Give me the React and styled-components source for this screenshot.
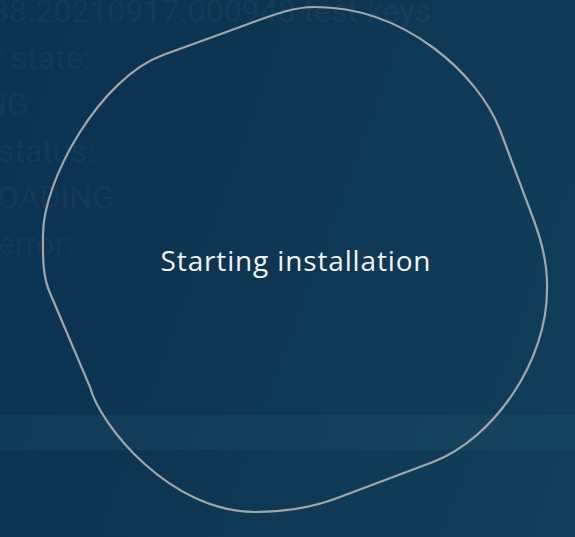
import React from 'react';
import styled, { createGlobalStyle } from 'styled-components';

const GlobalStyle = createGlobalStyle`
    html, body, #root {
        margin: 0;
        padding: 0;
        width: 100%;
        height: 100%;
    }
    body {
        background: #0d3452;
        font-family: Roboto, "Liberation Sans", sans-serif;
    }
`;

const Screen = styled.div`
    position: relative;
    width: 100vw;
    height: 100vh;
    overflow: hidden;
    display: flex;
    flex-direction: column;
    background: linear-gradient(110deg, #0b3250 0%, #0e3653 45%, #123f5a 100%);
`;

const Log = styled.div`
    margin-top: -12px;
    display: flex;
    flex-direction: column;
    font-family: Roboto, "Liberation Sans", sans-serif;
    font-size: 32px;
    line-height: 46.5px;
    color: rgba(255, 255, 255, 0.045);
    white-space: nowrap;
`;

const LogLine = styled.div`
    margin-left: ${p => p.$shift}px;
`;

const Band = styled.div`
    margin-top: auto;
    margin-bottom: 87px;
    height: 35px;
    background: rgba(70, 130, 150, 0.1);
`;

const Blob = styled.div`
    position: absolute;
    top: 6px;
    left: 42px;
    width: 508px;
    height: 508px;
    display: flex;
    align-items: center;
    justify-content: center;
`;

const Outline = styled.svg`
    position: absolute;
    inset: 0;
    width: 100%;
    height: 100%;
    overflow: visible;
`;

const Label = styled.div`
    position: relative;
    font-family: "Open Sans", "Noto Sans", sans-serif;
    font-weight: 400;
    font-size: 28px;
    color: #f2f4f6;
    letter-spacing: 0.85px;
`;

const logLines = [
    { text: '38.20210917.000948 test-keys', shift: -9 },
    { text: 'r state:', shift: -8 },
    { text: 'NG', shift: -16 },
    { text: 'status:', shift: -2 },
    { text: 'OADING', shift: -3 },
    { text: 'error:', shift: -2 },
];

const blobPath = `
    M 315 7
    C 405 7, 478 74, 500 130
    L 530 210
    C 539 233, 548 260, 547 290
    C 547 360, 495 438, 433 462
    L 340 497
    C 312 508, 280 512, 255 512
    C 170 512, 100 425, 90 387
    L 50 293
    C 42 275, 43 255, 43 235
    C 43 180, 100 78, 163 55
    L 240 27
    C 268 17, 290 7, 315 7
    Z
`;

const App = () => {
    return (
        <Screen>
            <GlobalStyle />
            <Log>
                {logLines.map((line, i) => (
                    <LogLine key={i} $shift={line.shift}>{line.text}</LogLine>
                ))}
            </Log>
            <Band />
            <Blob>
                <Outline viewBox="42 6 508 508">
                    <path d={blobPath} fill="none" stroke="#a2a6aa" strokeWidth="2.2" />
                </Outline>
                <Label>Starting installation</Label>
            </Blob>
        </Screen>
    );
};

export default App;
